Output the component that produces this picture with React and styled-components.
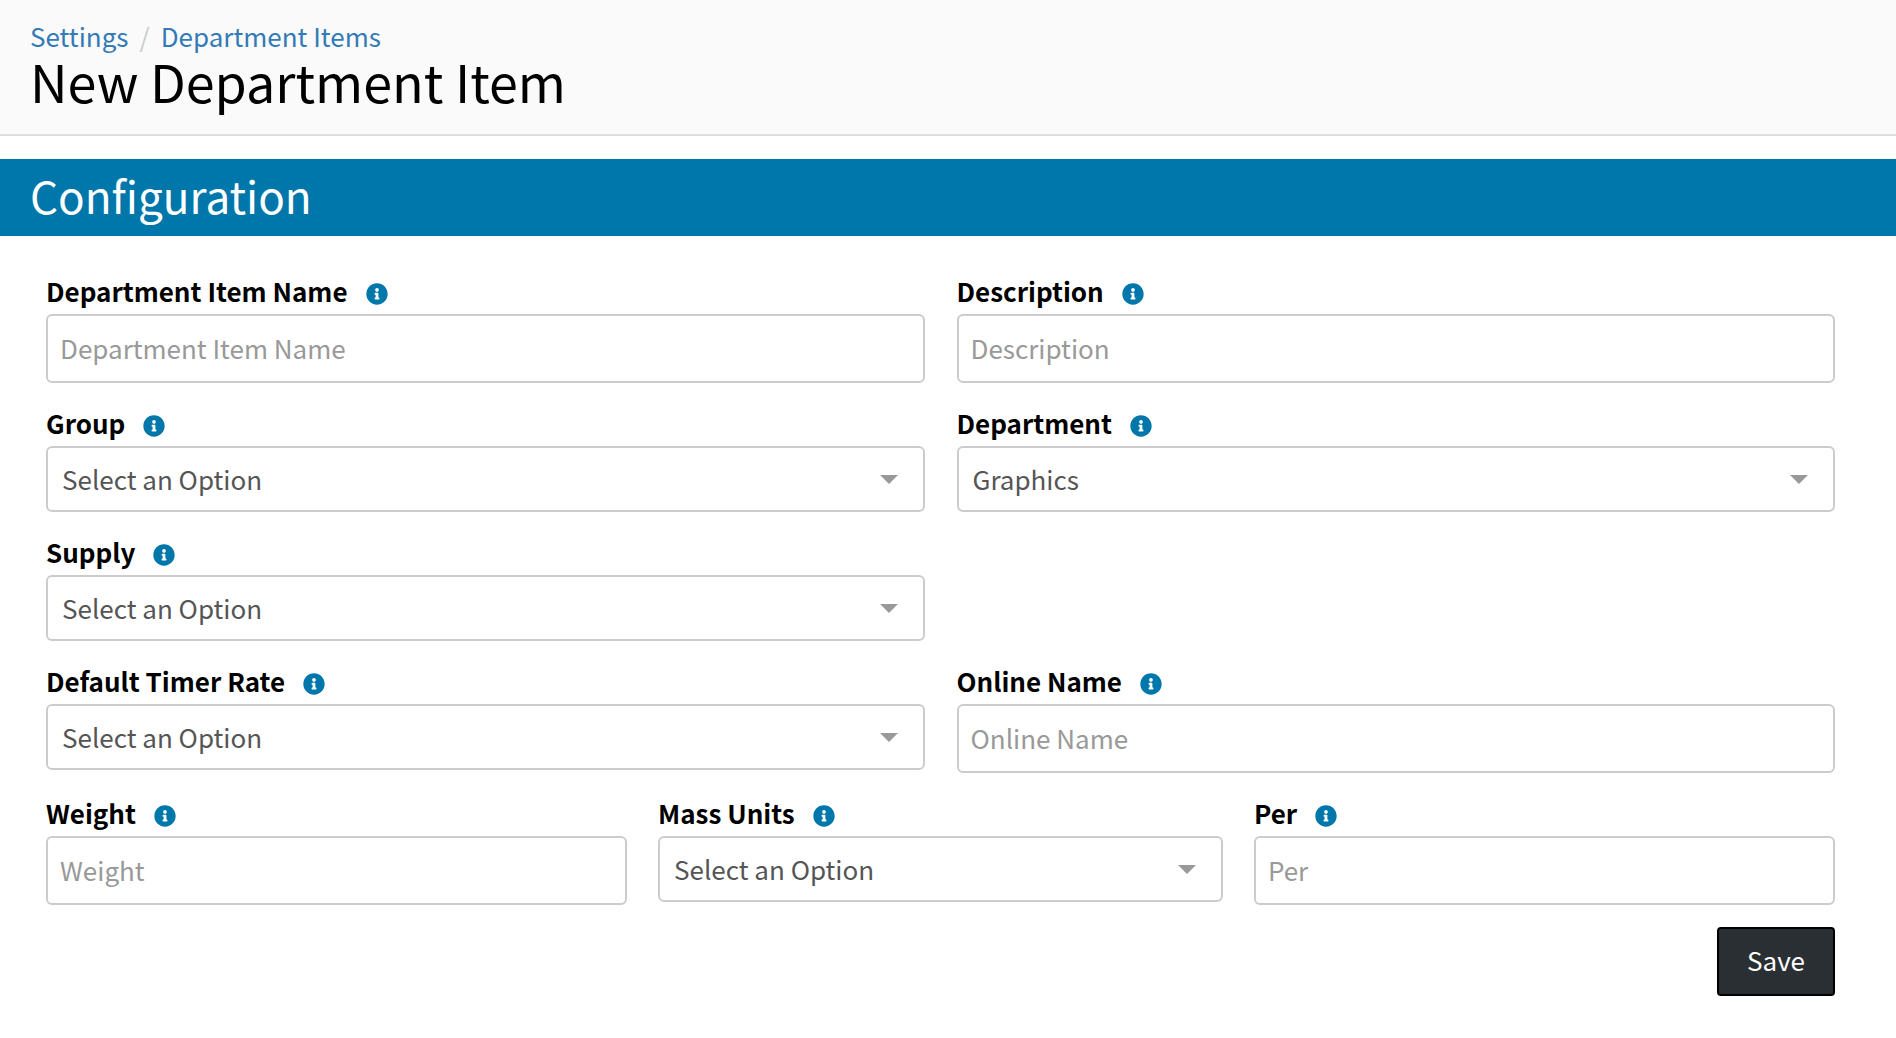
import { FaInfoCircle } from 'react-icons/fa'
import styled, { createGlobalStyle } from 'styled-components'

const GlobalStyle = createGlobalStyle`
* {
  box-sizing: border-box;
}
body {
  margin: 0;
  background: #fff;
  color: #000;
}
body, input, select, button {
  font-family: "Noto Sans CJK SC", "Noto Sans", sans-serif;
  font-size: 26px;
  line-height: 36px;
}
`

const Header = styled.header`
  padding: 18px 30px 26px;
  background: #fafafa;
  border-bottom: 2px solid #ddd;
`
const Breadcrumb = styled.nav`
  display: flex;
  gap: 11px;
`
const Crumb = styled.a`
  color: #337ab7;
  text-decoration: none;
`
const Separator = styled.span`
  color: #ccc;
`
const Title = styled.h1`
  margin: 0;
  font-size: 52px;
  font-weight: 400;
  line-height: 54px;
`
const SectionTitle = styled.h2`
  margin: 23px 0 0;
  padding: 6px 30px 11px;
  background: #0077aa;
  color: #fff;
  font-size: 44px;
  font-weight: 400;
  line-height: 60px;
`
const Form = styled.form`
  display: flex;
  flex-direction: column;
  gap: 22px;
  padding: 39px 61px 42px 46px;
`
const Rows = styled.div`
  display: flex;
  flex-direction: column;
  gap: 24px;
`
const Row = styled.div`
  display: grid;
  grid-template-columns: ${(props) => (props.$thirds ? '36fr 35fr 36fr' : '1fr 1fr')};
  align-items: start;
  gap: ${(props) => (props.$thirds ? '31px' : '32px')};
`
const FieldBox = styled.div`
  min-width: 0;
`
const LabelRow = styled.div`
  display: flex;
  align-items: flex-start;
  gap: 18px;
  height: 39px;
`
const Label = styled.label`
  font-weight: 700;
  line-height: 32px;
`
const InfoIcon = styled(FaInfoCircle)`
  width: 22px;
  height: 22px;
  margin-top: 8px;
  color: #0077aa;
`
const Input = styled.input`
  display: block;
  width: 100%;
  height: 69px;
  padding: 0 12px 2px;
  border: 2px solid #ccc;
  border-radius: 6px;
  background: #fff;
  color: #555;

  &::placeholder {
    color: #999;
    opacity: 1;
  }
`
const SelectBox = styled.div`
  position: relative;

  &::after {
    content: '';
    position: absolute;
    top: 29px;
    right: 27px;
    border: 9px solid transparent;
    border-top-color: #999;
    border-bottom: 0;
    pointer-events: none;
  }
`
const Select = styled.select`
  display: block;
  width: 100%;
  height: 66px;
  padding: 0 48px 0 14px;
  border: 2px solid #ccc;
  border-radius: 6px;
  background: #fff;
  color: #555;
  appearance: none;
`
const Actions = styled.div`
  display: flex;
  justify-content: flex-end;
`
const SaveButton = styled.button`
  height: 69px;
  padding: 0 28px 4px;
  border: 2px solid #000;
  border-radius: 4px;
  background: #2a2f33;
  color: #fff;
  cursor: pointer;
`

const Field = ({ id, label, children }) => {
  return (
    <FieldBox>
      <LabelRow>
        <Label htmlFor={id}>{label}</Label>
        <InfoIcon aria-hidden="true" />
      </LabelRow>
      {children}
    </FieldBox>
  )
}

const TextField = ({ id, label }) => (
  <Field id={id} label={label}>
    <Input id={id} name={id} type="text" placeholder={label} />
  </Field>
)

const SelectField = ({ id, label, value = 'Select an Option' }) => (
  <Field id={id} label={label}>
    <SelectBox>
      <Select id={id} name={id} defaultValue={value}>
        <option value={value}>{value}</option>
      </Select>
    </SelectBox>
  </Field>
)

const App = () => {
  return (
    <>
      <GlobalStyle />
      <Header>
        <Breadcrumb aria-label="Breadcrumb">
          <Crumb href="#settings">Settings</Crumb>
          <Separator>/</Separator>
          <Crumb href="#department-items">Department Items</Crumb>
        </Breadcrumb>
        <Title>New Department Item</Title>
      </Header>
      <main>
        <SectionTitle>Configuration</SectionTitle>
        <Form onSubmit={(e) => e.preventDefault()}>
          <Rows>
            <Row>
              <TextField id="name" label="Department Item Name" />
              <TextField id="description" label="Description" />
            </Row>
            <Row>
              <SelectField id="group" label="Group" />
              <SelectField id="department" label="Department" value="Graphics" />
            </Row>
            <Row>
              <SelectField id="supply" label="Supply" />
            </Row>
            <Row>
              <SelectField id="timerRate" label="Default Timer Rate" />
              <TextField id="onlineName" label="Online Name" />
            </Row>
            <Row $thirds>
              <TextField id="weight" label="Weight" />
              <SelectField id="massUnits" label="Mass Units" />
              <TextField id="per" label="Per" />
            </Row>
          </Rows>
          <Actions>
            <SaveButton type="submit">Save</SaveButton>
          </Actions>
        </Form>
      </main>
    </>
  )
}

export default App
